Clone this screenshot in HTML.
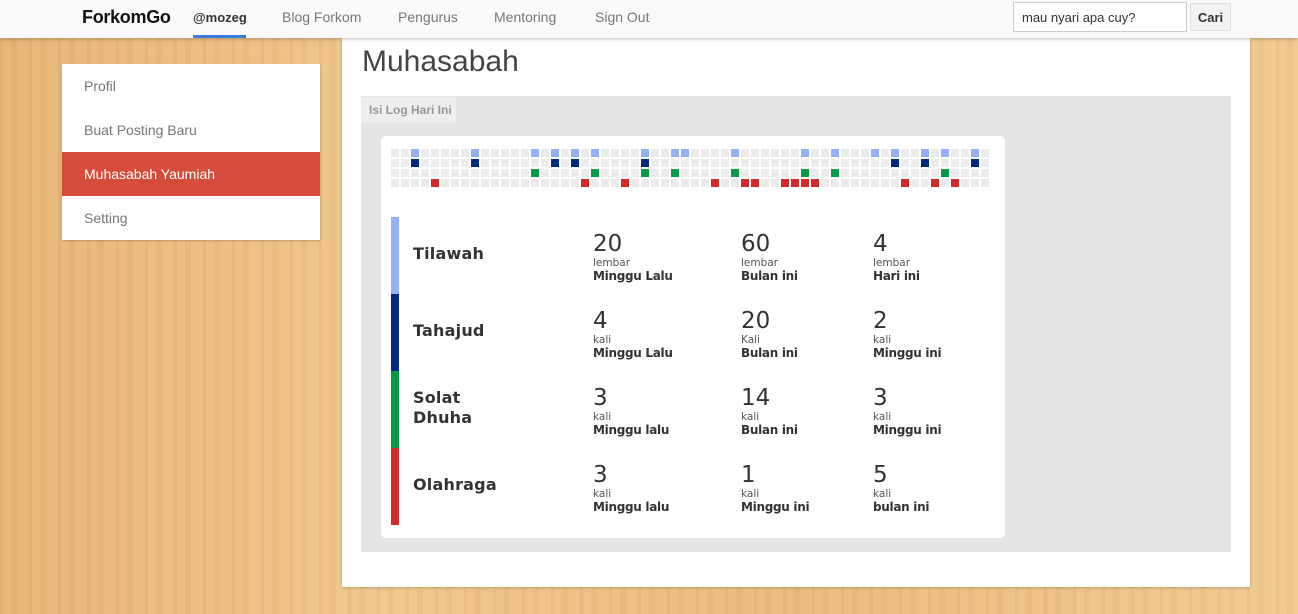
<!DOCTYPE html>
<html><head><meta charset="utf-8">
<style>
*{box-sizing:border-box;margin:0;padding:0}
body{width:1298px;height:614px;overflow:hidden;font-family:"Liberation Sans",sans-serif;position:relative;
background:
repeating-linear-gradient(90deg,rgba(180,110,40,.08) 0 3px,rgba(255,255,255,.04) 3px 11px,rgba(170,100,30,.05) 11px 17px,rgba(255,240,200,.05) 17px 29px),
linear-gradient(90deg,#e6b474,#efc68b 30%,#e9bb7c 60%,#f0c98f);}
.nav{position:absolute;left:0;top:0;width:1298px;height:38px;background:#fafafa;box-shadow:0 1px 4px rgba(0,0,0,.25);z-index:2}
.nav span{position:absolute;top:9px;font-size:14px;color:#777}
.brand{left:82px;top:7px!important;font-size:18px!important;font-weight:bold;color:#111!important;letter-spacing:-.3px}
.act{left:193px;font-weight:bold;color:#333!important;font-size:13px!important;top:10px!important}
.ul{position:absolute;left:193px;top:35px;width:53px;height:3px;background:#3b7ddd}
.search{position:absolute;left:1013px;top:2px;width:174px;height:30px;border:1px solid #ccc;background:#fff;font-size:13px;color:#333;padding:7px 8px}
.btn{position:absolute;left:1190px;top:3px;width:41px;height:28px;border:1px solid #ddd;background:#f3f3f3;border-radius:2px;font-size:13px;font-weight:bold;color:#333;padding:6px 0;text-align:center}
.side{position:absolute;left:62px;top:64px;width:258px;height:176px;background:#fff;box-shadow:0 1px 2px rgba(0,0,0,.2)}
.side div{height:44px;padding:14px 22px;font-size:14px;color:#777}
.side .on{background:#d54c3b;color:#fff}
.main{position:absolute;left:342px;top:38px;width:908px;height:549px;background:#fff;box-shadow:0 1px 3px rgba(0,0,0,.2)}
h1{position:absolute;left:20px;top:7px;font-weight:normal;font-size:30px;color:#444}
.gray{position:absolute;left:19px;top:58px;width:870px;height:456px;background:#e5e5e5}
.tab{position:absolute;left:0;top:1px;width:95px;height:26px;background:#eee;font-size:12px;font-weight:bold;color:#999;padding:6px 0 0 8px}
.card{position:absolute;left:20px;top:40px;width:624px;height:402px;background:#fff;border-radius:5px}
.grid{position:absolute;left:10px;top:13px}
.grid i{position:absolute;width:8px;height:8px;background:#ebebeb}
.row{position:absolute;left:10px;width:600px;height:77px;font-family:"DejaVu Sans",sans-serif;color:#333}
.bar{position:absolute;left:0;top:0;width:8px;height:77px}
.nm{position:absolute;left:22px;font-size:16px;font-weight:bold;color:#333;line-height:20px;letter-spacing:.2px}
.c{position:absolute;top:14px}
.c b{display:block;font-weight:normal;font-size:23px;line-height:26px;color:#333}
.c s{display:block;text-decoration:none;font-size:10.5px;line-height:12px;color:#555}
.c u{display:block;text-decoration:none;font-weight:bold;font-size:12px;line-height:14px;color:#333;letter-spacing:-.3px}
</style></head><body>
<div class="nav">
<span class="brand">ForkomGo</span><span class="act">@mozeg</span><div class="ul"></div>
<span style="left:282px">Blog Forkom</span><span style="left:398px">Pengurus</span><span style="left:494px">Mentoring</span><span style="left:595px">Sign Out</span>
<div class="search">mau nyari apa cuy?</div><div class="btn">Cari</div>
</div>
<div class="side"><div>Profil</div><div>Buat Posting Baru</div><div class="on">Muhasabah Yaumiah</div><div>Setting</div></div>
<div class="main"><h1>Muhasabah</h1>
<div class="gray"><div class="tab">Isi Log Hari Ini</div>
<div class="card"><div class="grid" id="g"></div>
<div class="row" style="top:81px"><div class="bar" style="background:#94b1f7"></div><div class="nm" style="top:27px">Tilawah</div>
<div class="c" style="left:202px"><b>20</b><s>lembar</s><u>Minggu Lalu</u></div><div class="c" style="left:350px"><b>60</b><s>lembar</s><u>Bulan ini</u></div><div class="c" style="left:482px"><b>4</b><s>lembar</s><u>Hari ini</u></div></div>
<div class="row" style="top:158px"><div class="bar" style="background:#032a82"></div><div class="nm" style="top:27px">Tahajud</div>
<div class="c" style="left:202px"><b>4</b><s>kali</s><u>Minggu Lalu</u></div><div class="c" style="left:350px"><b>20</b><s>Kali</s><u>Bulan ini</u></div><div class="c" style="left:482px"><b>2</b><s>kali</s><u>Minggu ini</u></div></div>
<div class="row" style="top:235px"><div class="bar" style="background:#039a45"></div><div class="nm" style="top:17px">Solat<br>Dhuha</div>
<div class="c" style="left:202px"><b>3</b><s>kali</s><u>Minggu lalu</u></div><div class="c" style="left:350px"><b>14</b><s>kali</s><u>Bulan ini</u></div><div class="c" style="left:482px"><b>3</b><s>kali</s><u>Minggu ini</u></div></div>
<div class="row" style="top:312px"><div class="bar" style="background:#d42a2a"></div><div class="nm" style="top:27px">Olahraga</div>
<div class="c" style="left:202px"><b>3</b><s>kali</s><u>Minggu lalu</u></div><div class="c" style="left:350px"><b>1</b><s>kali</s><u>Minggu ini</u></div><div class="c" style="left:482px"><b>5</b><s>kali</s><u>bulan ini</u></div></div>
</div></div></div>
<script>
var R=[[2,8,14,16,18,20,25,28,29,34,41,44,48,50,53,55,58],[2,8,16,18,25,50,53,58],[14,20,25,28,34,41,44,55],[4,19,23,32,35,36,39,40,41,42,51,54,56]];
var C=['#94b1f7','#032a82','#039a45','#d42a2a'];var h='';
for(var r=0;r<4;r++)for(var c=0;c<60;c++){var col=R[r].indexOf(c)>=0?C[r]:'#ebebeb';h+='<i style="left:'+c*10+'px;top:'+r*10+'px;background:'+col+'"></i>';}
document.getElementById('g').innerHTML=h;
</script>
</body></html>
